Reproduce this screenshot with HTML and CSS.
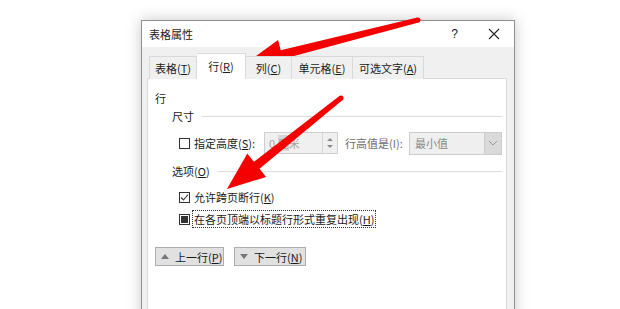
FILE: index.html
```html
<!DOCTYPE html>
<html lang="zh-CN">
<head>
    <meta charset="UTF-8">
    <title>表格属性</title>
    <link rel="stylesheet" href="styles.css">
</head>
<body>
    <div class="stage">
      <div class="dialog">
        <div class="title-bar">
          <span class="title">表格属性</span>
          <span class="help">?</span>
          <svg class="close" width="12" height="12" viewBox="0 0 12 12">
            <path d="M1 1L11 11M11 1L1 11" stroke="#222" stroke-width="1.1" fill="none"/>
          </svg>
        </div>

        <div class="dialog-body">
          <div class="tabs">
            <div class="tab tab-table">表格(<u>T</u>)</div>
            <div class="tab tab-row active">行(<u>R</u>)</div>
            <div class="tab tab-col">列(<u>C</u>)</div>
            <div class="tab tab-cell">单元格(<u>E</u>)</div>
            <div class="tab tab-alt">可选文字(<u>A</u>)</div>
          </div>

          <div class="panel">
            <p class="panel-title">行</p>

            <div class="group-title">尺寸</div>
            <div class="size-row">
              <span class="box"></span>
              <span class="size-label">指定高度(<u>S</u>):</span>
              <div class="spin">
                <span class="spin-text">0 <span class="sel">厘</span>米</span>
                <div class="spin-btns">
                  <span class="arr-up"></span>
                  <span class="arr-down"></span>
                </div>
              </div>
              <span class="rule-label">行高值是(I):</span>
              <div class="select">
                <span class="select-text">最小值</span>
                <span class="select-btn">
                  <svg width="10" height="6" viewBox="0 0 10 6">
                    <path d="M1 1L5 5L9 1" stroke="#9a9a9a" stroke-width="1" fill="none"/>
                  </svg>
                </span>
              </div>
            </div>

            <div class="group-title group-options">选项(<u>O</u>)</div>
            <div class="check-row first">
              <span class="box">
                <svg width="9" height="9" viewBox="0 0 9 9">
                  <path d="M1 4.5L3.5 7L8 1.5" stroke="#333" stroke-width="1.1" fill="none"/>
                </svg>
              </span>
              <span class="check-label">允许跨页断行(<u>K</u>)</span>
            </div>
            <div class="check-row">
              <span class="box"><span class="fill"></span></span>
              <span class="check-label focus">在各页顶端以标题行形式重复出现(<u>H</u>)</span>
            </div>

            <div class="nav-buttons">
              <button class="nav-btn prev"><span class="tri-up"></span><span class="btn-text">上一行(<u>P</u>)</span></button>
              <button class="nav-btn next"><span class="tri-down"></span><span class="btn-text">下一行(<u>N</u>)</span></button>
            </div>
          </div>
        </div>
      </div>

      <!-- red callout arrows -->
      <svg class="arrows" width="620" height="309" viewBox="0 0 620 309">
        <polygon points="245,64 278.1,40.1 280.7,50.2 417.4,17.6 418.6,22.4 282.9,59 285.5,69.1" fill="#f50000"/>
        <circle cx="418" cy="20" r="2.5" fill="#f50000"/>
        <polygon points="227,189 266.1,177 259.5,168.8 342.6,100 339.4,96 253.9,161.8 247.3,153.6" fill="#f50000"/>
        <circle cx="341" cy="98" r="2.5" fill="#f50000"/>
      </svg>
    </div>
</body>
</html>
```

FILE: styles.css
```css
* {
    margin: 0;
    padding: 0;
    box-sizing: border-box;
}

body {
    background-color: #fff;
    font-family: "Noto Sans CJK SC", "Noto Sans", sans-serif;
    font-size: 11px;
    color: #1a1a1a;
    white-space: nowrap;
}

u {
    text-decoration: underline;
    text-underline-offset: 1px;
}

.stage {
    position: relative;
    width: 620px;
    height: 309px;
    overflow: hidden;
    padding-top: 20px;
    padding-left: 141px;
}

.dialog {
    width: 374px;
    height: 320px;
    border: 1px solid #8f8f8f;
    background-color: #f0f0f0;
    box-shadow: 0 0 14px rgba(0, 0, 0, 0.22);
    display: flex;
    flex-direction: column;
}

.title-bar {
    height: 26px;
    background-color: #fff;
    display: flex;
    align-items: center;
    padding-left: 7px;
    flex-shrink: 0;
}

.title {
    font-size: 11px;
    line-height: 14px;
    flex: 1;
}

.help {
    font-family: "Liberation Sans", sans-serif;
    font-size: 12px;
    margin-right: 30px;
}

.close {
    margin-right: 14px;
}

.dialog-body {
    flex: 1;
    padding: 7px 7px 0 5px;
    display: flex;
    flex-direction: column;
}

.tabs {
    display: flex;
    align-items: flex-end;
    height: 25px;
    padding-left: 2px;
    position: relative;
    z-index: 1;
    margin-bottom: -1px;
}

.tab {
    height: 23px;
    border: 1px solid #d9d9d9;
    border-left: none;
    border-bottom: none;
    background-color: #f0f0f0;
    display: flex;
    align-items: center;
    justify-content: center;
    line-height: 14px;
}

.tab-table {
    width: 48px;
    border-left: 1px solid #d9d9d9;
}

.tab-row { width: 49px; }
.tab-col { width: 46px; }
.tab-cell { width: 61px; }
.tab-alt { width: 71px; }

.tab.active {
    height: 26px;
    background-color: #fff;
    padding-bottom: 2px;
}

.panel {
    flex: 1;
    background-color: #fff;
    border: 1px solid #d9d9d9;
    padding: 11px 4px 0 7px;
}

.panel-title {
    line-height: 16px;
    text-align: left;
}

.group-title {
    display: flex;
    align-items: center;
    line-height: 16px;
    margin-top: 2px;
    padding-left: 17px;
}

.group-title::after {
    content: "";
    flex: 1;
    border-top: 1px solid #dcdcdc;
    margin-left: 8px;
}

.group-options {
    margin-top: 9px;
}

.size-row {
    display: flex;
    align-items: center;
    height: 22px;
    margin-top: 8px;
    padding-left: 24px;
}

.size-row > * {
    flex-shrink: 0;
}

.box {
    width: 11px;
    height: 11px;
    border: 1px solid #333;
    background-color: #fff;
    display: flex;
    align-items: center;
    justify-content: center;
    flex-shrink: 0;
}

.size-label {
    margin-left: 4px;
    line-height: 14px;
}

.spin {
    width: 74px;
    height: 22px;
    margin-left: 9px;
    border: 1px solid #cfcfcf;
    background-color: #f0f0f0;
    display: flex;
}

.spin-text {
    flex: 1;
    color: #a2a2a2;
    padding-left: 4px;
    line-height: 20px;
}

.sel {
    background-color: #d6d6d6;
}

.spin-btns {
    width: 15px;
    border-left: 1px solid #d6d6d6;
    display: flex;
    flex-direction: column;
    align-items: center;
    justify-content: space-around;
    padding: 3px 0;
}

.arr-up,
.arr-down {
    width: 0;
    height: 0;
    border-left: 3px solid transparent;
    border-right: 3px solid transparent;
}

.arr-up {
    border-bottom: 3px solid #8a8a8a;
}

.arr-down {
    border-top: 3px solid #8a8a8a;
}

.rule-label {
    margin-left: 7px;
    color: #6d6d6d;
    line-height: 14px;
    width: 64px;
}

.select {
    width: 93px;
    height: 23px;
    border: 1px solid #cccccc;
    background-color: #efefef;
    display: flex;
}

.select-text {
    flex: 1;
    color: #8a8a8a;
    padding-left: 5px;
    line-height: 21px;
}

.select-btn {
    width: 17px;
    background-color: #dadada;
    border-left: 1px solid #cccccc;
    display: flex;
    align-items: center;
    justify-content: center;
}

.check-row {
    display: flex;
    align-items: center;
    height: 16px;
    margin-top: 6px;
    padding-left: 24px;
}

.check-row.first {
    margin-top: 10px;
}

.check-label {
    margin-left: 3px;
    line-height: 14px;
    padding: 1px 1px;
}

.check-label.focus {
    outline: 1px dotted #333;
}

.fill {
    width: 7px;
    height: 7px;
    background-color: #333;
}

.nav-buttons {
    display: flex;
    gap: 10px;
    margin-top: 20px;
}

.nav-btn {
    height: 19px;
    border: 1px solid #adadad;
    background-color: #e1e1e1;
    font-family: inherit;
    font-size: 11px;
    color: #1a1a1a;
    display: flex;
    align-items: center;
    padding-left: 5px;
    gap: 6px;
    white-space: nowrap;
}

.btn-text {
    line-height: 14px;
}

.prev { width: 69px; }
.next { width: 72px; }

.tri-up,
.tri-down {
    width: 0;
    height: 0;
    flex-shrink: 0;
    border-left: 4px solid transparent;
    border-right: 4px solid transparent;
}

.tri-up {
    border-bottom: 5px solid #777;
}

.tri-down {
    border-top: 5px solid #777;
}

.arrows {
    position: absolute;
    left: 0;
    top: 0;
    pointer-events: none;
}
```
